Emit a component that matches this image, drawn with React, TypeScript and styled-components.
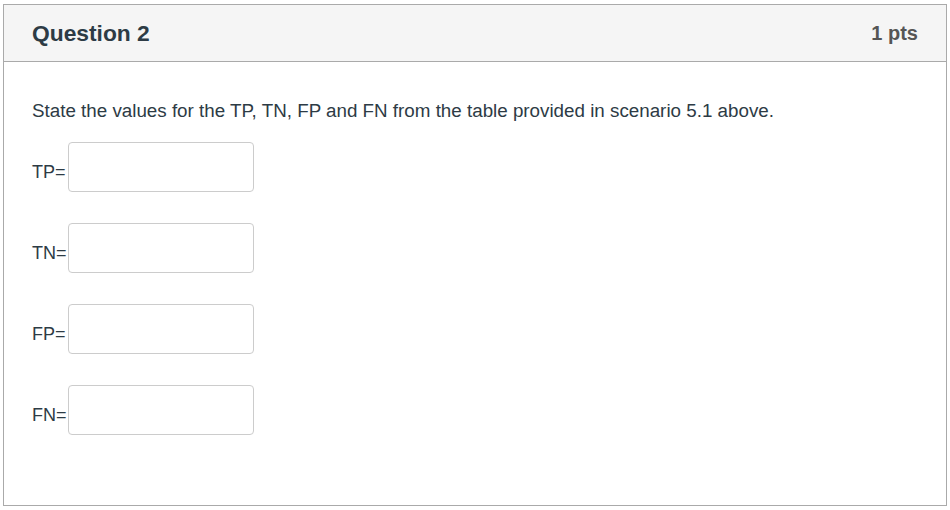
import styled, { createGlobalStyle } from "styled-components";

const GlobalStyle = createGlobalStyle`
  html, body {
    margin: 0;
    padding: 0;
    background: #fff;
    font-family: "Liberation Sans", Arial, sans-serif;
    color: #2d3b45;
  }
`;

const Page = styled.div`
  padding: 4px 3px 4px 3px;
`;

const Card = styled.div`
  width: 942px;
  height: 500px;
  border: 1px solid #aaaaaa;
  display: flex;
  flex-direction: column;
`;

const Header = styled.header`
  height: 56px;
  background: #f5f5f5;
  border-bottom: 1px solid #aaaaaa;
  display: flex;
  align-items: center;
  justify-content: space-between;
  padding: 0 28px 0 28px;
`;

const Title = styled.h2`
  margin: 0;
  font-size: 22.8px;
  font-weight: 700;
  color: #2d3b45;
`;

const Points = styled.span`
  font-size: 20px;
  font-weight: 700;
  color: #555555;
`;

const Body = styled.div`
  padding: 38px 28px 0 28px;
`;

const Prompt = styled.p`
  margin: 0 0 20px 0;
  font-size: 18.8px;
  line-height: 22px;
`;

const Row = styled.div`
  display: flex;
  align-items: center;
  margin-bottom: 31px;
`;

const Label = styled.span<{ $shift: number }>`
  font-size: 18px;
  padding-top: 10px;
  margin-right: ${(p) => p.$shift}px;
`;

const Field = styled.input`
  box-sizing: border-box;
  width: 186px;
  height: 50px;
  border: 1px solid #cccccc;
  border-radius: 4px;
  background: #fff;
  padding: 4px 8px;
  font-size: 16px;
  outline: none;
`;

const fields = [
  { name: "TP", shift: 2 },
  { name: "TN", shift: 1 },
  { name: "FP", shift: 2 },
  { name: "FN", shift: 1 },
];

export default function App() {
  return (
    <Page>
      <GlobalStyle />
      <Card>
        <Header>
          <Title>Question 2</Title>
          <Points>1 pts</Points>
        </Header>
        <Body>
          <Prompt>
            State the values for the TP, TN, FP and FN from the table provided in scenario 5.1 above.
          </Prompt>
          {fields.map((f) => (
            <Row key={f.name}>
              <Label $shift={f.shift}>{f.name}=</Label>
              <Field type="text" aria-label={f.name} />
            </Row>
          ))}
        </Body>
      </Card>
    </Page>
  );
}
